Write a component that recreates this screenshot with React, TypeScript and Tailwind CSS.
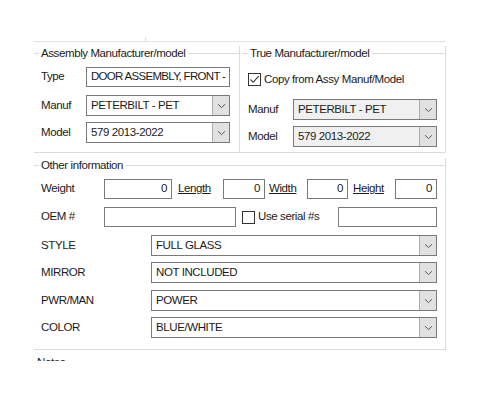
import React from 'react';

const Chevron = () => (
  <svg width="9" height="6" viewBox="0 0 9 6" className="block">
    <path d="M1 1.2 L4.5 4.6 L8 1.2" fill="none" stroke="#5a5a5a" strokeWidth="1" />
  </svg>
);

function TextBox({ w, value = '', right = false, extra = '' }: { w: string; value?: string; right?: boolean; extra?: string }) {
  return (
    <div
      className={`${w} h-[20px] border border-[#7a7a7a] bg-white flex items-center px-[4px] whitespace-nowrap overflow-hidden ${
        right ? 'justify-end' : ''
      } ${extra}`}
    >
      {value}
    </div>
  );
}

function Combo({ w, value, disabled = false }: { w: string; value: string; disabled?: boolean }) {
  return (
    <div
      className={`${w} h-[21px] border border-[#7a7a7a] flex ${disabled ? 'bg-[#f0f0f0]' : 'bg-white'}`}
    >
      <div className="flex-1 flex items-center px-[4px] whitespace-nowrap overflow-hidden">{value}</div>
      <div className="w-[17px] bg-[#e1e1e1] border-l border-[#adadad] flex items-center justify-center">
        <Chevron />
      </div>
    </div>
  );
}

function CheckBox({ checked = false }: { checked?: boolean }) {
  return (
    <div className="w-[13px] h-[13px] border border-[#333] bg-white flex items-center justify-center shrink-0">
      {checked && (
        <svg width="11" height="11" viewBox="0 0 11 11" className="block">
          <path d="M1.5 5.5 L4.2 8.3 L9.6 2.2" fill="none" stroke="#333" strokeWidth="1.1" />
        </svg>
      )}
    </div>
  );
}

function GroupTitle({ title, lead = 'w-[5px]' }: { title: string; lead?: string }) {
  return (
    <div className="h-[14px] flex items-center">
      <div className={`${lead} h-px bg-[#dcdcdc]`} />
      <span className="px-[2px] leading-[14px] whitespace-nowrap">{title}</span>
      <div className="flex-1 h-px bg-[#dcdcdc]" />
    </div>
  );
}

export default function App() {
  const rows = [
    { label: 'STYLE', value: 'FULL GLASS', mt: 'mt-[8px]' },
    { label: 'MIRROR', value: 'NOT INCLUDED', mt: 'mt-[6px]' },
    { label: 'PWR/MAN', value: 'POWER', mt: 'mt-[7px]' },
    { label: 'COLOR', value: 'BLUE/WHITE', mt: 'mt-[6px]' },
  ];

  return (
    <div className="w-[500px] h-[400px] bg-white overflow-hidden text-[11.5px] tracking-[-0.4px] text-[#1b1b1b] font-['Liberation_Sans',Arial,sans-serif]">
      {/* top edge */}
      <div className="h-[41px] pl-[145px] flex items-end">
        <div className="w-px h-[4px] bg-[#dcdcdc]" />
      </div>
      <div className="ml-[34px] w-[412px] h-px bg-[#e3e3e3]" />

      {/* manufacturer groups */}
      <div className="ml-[34px] w-[412px] flex mt-[4px]">
        <div className="w-[206px] h-[107px] border-r border-b border-[#dcdcdc]">
          <GroupTitle title="Assembly Manufacturer/model" />
          <div className="pl-[7px]">
            <div className="flex items-center mt-[7px]">
              <span className="w-[45px]">Type</span>
              <TextBox w="w-[144px]" value="DOOR ASSEMBLY, FRONT -" extra="tracking-[-0.7px]" />
            </div>
            <div className="flex items-center mt-[8px]">
              <span className="w-[45px]">Manuf</span>
              <Combo w="w-[144px]" value="PETERBILT - PET" />
            </div>
            <div className="flex items-center mt-[6px]">
              <span className="w-[45px]">Model</span>
              <Combo w="w-[144px]" value="579 2013-2022" />
            </div>
          </div>
        </div>

        <div className="w-[206px] h-[107px] border-r border-b border-[#dcdcdc]">
          <GroupTitle title="True Manufacturer/model" lead="w-[6px] ml-[2px]" />
          <div className="pl-[8px]">
            <div className="flex items-center mt-[11px] gap-[3px]">
              <CheckBox checked />
              <span>Copy from Assy Manuf/Model</span>
            </div>
            <div className="flex items-center mt-[11px]">
              <span className="w-[45px]">Manuf</span>
              <Combo w="w-[144px]" value="PETERBILT - PET" disabled />
            </div>
            <div className="flex items-center mt-[6px]">
              <span className="w-[45px]">Model</span>
              <Combo w="w-[144px]" value="579 2013-2022" disabled />
            </div>
          </div>
        </div>
      </div>

      {/* other information */}
      <div className="ml-[34px] w-[412px] mt-[5px] h-[192px] border-r border-b border-[#dcdcdc]">
        <GroupTitle title="Other information" />
        <div className="pl-[7px]">
          <div className="flex items-center mt-[7px]">
            <span className="w-[63px]">Weight</span>
            <TextBox w="w-[68px]" value="0" right />
            <span className="w-[51px] pl-[6px] underline">Length</span>
            <TextBox w="w-[42px]" value="0" right />
            <span className="w-[42px] pl-[4px] underline">Width</span>
            <TextBox w="w-[41px]" value="0" right />
            <span className="w-[47px] pl-[5px] underline">Height</span>
            <TextBox w="w-[42px]" value="0" right />
          </div>
          <div className="flex items-center mt-[8px]">
            <span className="w-[63px]">OEM #</span>
            <TextBox w="w-[132px]" />
            <div className="w-[102px] pl-[6px] flex items-center gap-[3px]">
              <CheckBox />
              <span>Use serial #s</span>
            </div>
            <TextBox w="w-[99px]" />
          </div>
          {rows.map((r) => (
            <div key={r.label} className={`flex items-center ${r.mt}`}>
              <span className="w-[110px]">{r.label}</span>
              <Combo w="w-[286px]" value={r.value} />
            </div>
          ))}
        </div>
      </div>

      {/* notes, cut off */}
      <div className="h-[11px] overflow-hidden pl-[37px] pt-[4px]">
        <span className="leading-[14px]">Notes</span>
      </div>
    </div>
  );
}
